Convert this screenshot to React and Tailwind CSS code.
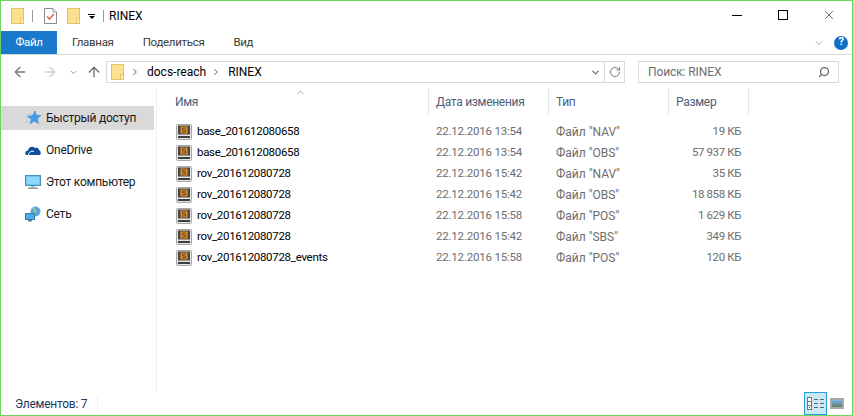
import React from "react";
import { ArrowLeft, ArrowRight, ArrowUp, ChevronDown, ChevronRight, ChevronUp, RotateCw, Search, X } from "lucide-react";

const files = [
  ["base_201612080658", "22.12.2016 13:54", 'Файл "NAV"', "19 КБ"],
  ["base_201612080658", "22.12.2016 13:54", 'Файл "OBS"', "57 937 КБ"],
  ["rov_201612080728", "22.12.2016 15:42", 'Файл "NAV"', "35 КБ"],
  ["rov_201612080728", "22.12.2016 15:42", 'Файл "OBS"', "18 858 КБ"],
  ["rov_201612080728", "22.12.2016 15:58", 'Файл "POS"', "1 629 КБ"],
  ["rov_201612080728", "22.12.2016 15:42", 'Файл "SBS"', "349 КБ"],
  ["rov_201612080728_events", "22.12.2016 15:58", 'Файл "POS"', "120 КБ"],
];

const FolderIcon = ({ className }) => (
  <svg width="13" height="16" viewBox="0 0 13 16" className={className}>
    <rect x="0.5" y="0.5" width="12" height="15" fill="#fbe08f" stroke="#e8c25c" />
    <rect x="9.5" y="10.5" width="3" height="5" fill="#fdeeb8" stroke="#e8c25c" />
  </svg>
);

const CheckDocIcon = () => (
  <svg width="13" height="16" viewBox="0 0 13 16">
    <path d="M0.5 0.5H9L12.5 4V15.5H0.5Z" fill="#fff" stroke="#8a8a8a" />
    <path d="M9 0.5V4H12.5" fill="#eee" stroke="#a0a0a0" />
    <path d="M3 8.5L5.5 11L10 6" fill="none" stroke="#e8603a" strokeWidth="1.5" />
  </svg>
);

const FileIcon = () => (
  <svg width="16" height="16" viewBox="0 0 16 16" className="shrink-0">
    <rect x="0.5" y="0.5" width="15" height="15" rx="1" fill="#e4e4e4" stroke="#a8a8a8" />
    <rect x="2" y="1.5" width="12" height="9" fill="#4a4640" />
    <rect x="4.5" y="2.5" width="7" height="7" fill="#e0902c" />
    <path d="M10 4H6.5V6H9.5V8H6" fill="none" stroke="#5a4020" strokeWidth="0.9" />
    <rect x="2" y="12" width="12" height="2" fill="#3e3e3e" />
  </svg>
);

const StarIcon = () => (
  <svg width="16" height="16" viewBox="0 0 16 16">
    <path d="M10 1L11.3 5.3L15.8 5.6L12.3 8.6L13.5 13.5L9.3 11L5 13.8L6.4 9L2.5 6.5L7.8 5.5Z" fill="#3f9fe8" stroke="#2b7fc4" strokeWidth="0.5" />
    <path d="M1 4.5H5M0 8H3M1 11.5H4" stroke="#a6d2f2" />
  </svg>
);

const CloudIcon = () => (
  <svg width="16" height="16" viewBox="0 0 16 16">
    <path d="M1 13C-0.5 11 0.5 8.5 3 8.5C3.5 5 7.5 3.5 10 6C12.5 5 14 6.5 14 8C15.5 8.5 16.5 11.5 15 13Z" fill="#0f4e9e" />
    <path d="M3.5 13C3.5 10.5 6 8.5 9 9.5" fill="none" stroke="#fff" strokeWidth="1" />
  </svg>
);

const MonitorIcon = () => (
  <svg width="16" height="16" viewBox="0 0 16 16">
    <rect x="0.5" y="1.5" width="15" height="10" fill="#6cc5f0" stroke="#4a8fb8" />
    <rect x="2" y="3" width="12" height="7" fill="#8ed8f8" />
    <rect x="6" y="12" width="4" height="1.5" fill="#a8b4bc" />
    <rect x="3" y="13.5" width="10" height="1.5" fill="#8d9aa3" />
  </svg>
);

const NetworkIcon = () => (
  <svg width="16" height="16" viewBox="0 0 16 16">
    <circle cx="10.5" cy="5.5" r="5" fill="#5da7d8" />
    <path d="M8 2C10 3 11 5 9.5 7" fill="none" stroke="#9bd07c" strokeWidth="1.5" />
    <rect x="0.5" y="7.5" width="9" height="6" fill="#4aaee6" stroke="#2b7fb4" />
    <rect x="3" y="14" width="4" height="1.5" fill="#6d7d88" />
  </svg>
);

const DetailsIcon = () => (
  <svg width="17" height="13" viewBox="0 0 17 13">
    <rect x="0.5" y="0.5" width="4" height="4" fill="#fff" stroke="#777" />
    <rect x="0.5" y="4.5" width="4" height="4" fill="#fff" stroke="#777" />
    <rect x="0.5" y="8.5" width="4" height="4" fill="#fff" stroke="#777" />
    <rect x="2" y="10" width="1" height="1" fill="#c0392b" />
    <path d="M7 2.5H11M13 2.5H17M7 6.5H11M13 6.5H17M7 10.5H11M13 10.5H17" stroke="#666" />
  </svg>
);

const navItems = [
  ["Быстрый доступ", <StarIcon />, true],
  ["OneDrive", <CloudIcon />, false],
  ["Этот компьютер", <MonitorIcon />, false],
  ["Сеть", <NetworkIcon />, false],
];

const columns = [
  ["Имя", "w-[255px] pl-[1px]"],
  ["Дата изменения", "w-[120px] pl-[7px]"],
  ["Тип", "w-[120px] pl-[7px]"],
  ["Размер", "w-[80px] pl-[7px]"],
];

const App = () => {
  return (
    <div
      className="w-[853px] h-[416px] flex flex-col bg-white border border-[#6dd35c] text-[12px] text-black overflow-hidden"
      style={{ fontFamily: 'Roboto, sans-serif' }}
    >
      {/* Title bar */}
      <div className="h-[30px] flex items-center shrink-0">
        <FolderIcon className="ml-[10px]" />
        <div className="ml-[8px] w-px h-[12px] bg-[#999]" />
        <div className="ml-[11px]"><CheckDocIcon /></div>
        <FolderIcon className="ml-[10px]" />
        <div className="ml-[8px] flex flex-col items-center w-[7px] gap-px">
          <div className="w-[7px] h-px bg-black" />
          <div className="w-0 h-0 border-x-[3px] border-x-transparent border-t-[3px] border-t-black" />
        </div>
        <div className="ml-[8px] w-px h-[12px] bg-[#999]" />
        <span className="ml-[5px]">RINEX</span>
        <div className="ml-auto flex items-center -mt-[2px]">
          <div className="w-[46px] flex justify-center"><div className="w-[10px] h-px bg-black" /></div>
          <div className="w-[46px] flex justify-center"><div className="w-[10px] h-[10px] border border-black" /></div>
          <div className="w-[46px] flex justify-center"><X size={14} strokeWidth={1} /></div>
        </div>
      </div>

      {/* Ribbon tabs */}
      <div className="h-[24px] flex items-stretch border-b border-[#dadbdc] shrink-0 text-[11.5px] tracking-[-0.3px]">
        <div className="w-[56px] bg-[#1979ca] text-white flex items-center justify-center">Файл</div>
        <div className="ml-[15px] flex items-center text-[#3b3b3b]">Главная</div>
        <div className="ml-[29px] flex items-center text-[#3b3b3b]">Поделиться</div>
        <div className="ml-[29px] flex items-center text-[#3b3b3b]">Вид</div>
        <div className="ml-auto flex items-center gap-[9px] mr-[4px]">
          <ChevronDown size={12} className="text-[#b0b0b0]" />
          <div className="w-[14px] h-[14px] rounded-full bg-[#1070c8] text-white flex items-center justify-center text-[11px] font-bold">?</div>
        </div>
      </div>

      {/* Address row */}
      <div className="h-[33px] flex items-center shrink-0 pt-[1px]">
        <ArrowLeft size={16} strokeWidth={2} className="ml-[11px] text-[#7a7a7a]" />
        <ArrowRight size={16} strokeWidth={2} className="ml-[14px] text-[#d0d0d0]" />
        <ChevronDown size={9} strokeWidth={2.5} className="ml-[11px] text-[#8a8a8a]" />
        <ArrowUp size={16} strokeWidth={2} className="ml-[8px] text-[#6e6e6e]" />
        <div className="ml-[4px] w-[519px] h-[22px] flex items-center border border-[#d9d9d9]">
          <FolderIcon className="ml-[4px]" />
          <ChevronRight size={10} strokeWidth={2.5} className="ml-[6px] text-[#777]" />
          <span className="ml-[7px]">docs-reach</span>
          <ChevronRight size={10} strokeWidth={2.5} className="ml-[5px] text-[#777]" />
          <span className="ml-[7px]">RINEX</span>
          <ChevronDown size={11} strokeWidth={2.5} className="ml-auto mr-[3px] text-[#666]" />
          <div className="w-[20px] h-full border-l border-[#d9d9d9] flex items-center justify-center">
            <RotateCw size={12} strokeWidth={2} className="text-[#7a7a7a]" />
          </div>
        </div>
        <div className="ml-[13px] w-[201px] h-[22px] flex items-center border border-[#d9d9d9] text-[#6d6d6d]">
          <span className="ml-[9px] tracking-[-0.1px]">Поиск: RINEX</span>
          <Search size={12} strokeWidth={2.5} className="ml-auto mr-[8px] -scale-x-100 text-[#666]" />
        </div>
      </div>

      {/* Body */}
      <div className="flex-1 flex min-h-0">
        <div className="w-[156px] border-r border-[#f0f0f0] pt-[18px] flex flex-col gap-[8px] shrink-0">
          {navItems.map(([label, icon, selected]) => (
            <div key={label} className={`h-[24px] w-[153px] flex items-center pl-[24px] text-[#1a1a1a] tracking-[-0.25px] ${selected ? "bg-[#d9d9d9]" : ""}`}>
              {icon}
              <span className="ml-[5px]">{label}</span>
            </div>
          ))}
        </div>
        <div className="flex-1 pl-[17px] relative">
          <ChevronUp size={11} strokeWidth={1.5} className="absolute left-[138px] -top-[1px] text-[#808080]" />
          <div className="h-[27px] flex items-stretch tracking-[-0.3px]">
            {columns.map(([label, cls]) => (
              <div key={label} className={`${cls} pt-[1px] flex items-center border-r border-[#e5e5e5] text-[#4c607a]`}>{label}</div>
            ))}
          </div>
          <div className="pt-[6px] flex flex-col">
            {files.map(([name, date, type, size], i) => (
              <div key={i} className="h-[21px] flex items-center">
                <div className="w-[255px] pl-[2px] flex items-center gap-[5px]">
                  <FileIcon />
                  <span className="text-[11.5px] tracking-[-0.3px]">{name}</span>
                </div>
                <div className="w-[120px] pl-[7px] text-[#6d6d6d] text-[11.5px] tracking-[-0.2px]">{date}</div>
                <div className="w-[120px] pl-[7px] text-[#6d6d6d]">{type}</div>
                <div className="w-[80px] pr-[8px] text-right text-[#6d6d6d] text-[11.5px] tracking-[-0.4px]">{size}</div>
              </div>
            ))}
          </div>
        </div>
      </div>

      {/* Status bar */}
      <div className="h-[23px] flex items-center shrink-0">
        <span className="ml-[14px] text-[#1e395b] tracking-[-0.25px]">Элементов: 7</span>
        <div className="ml-[10px] w-px h-[16px] bg-[#f0f0f0]" />
        <div className="ml-auto flex items-center mr-[8px] gap-[3px]">
          <div className="w-[23px] h-[23px] border border-[#26a0da] bg-[#cbe8f6] flex items-center justify-center">
            <DetailsIcon />
          </div>
          <div className="w-[14px] h-[11px] border-2 border-[#a8a8a8] bg-gradient-to-b from-[#7db4ee] to-[#5d7f62]" />
        </div>
      </div>
    </div>
  );
};

export default App;
